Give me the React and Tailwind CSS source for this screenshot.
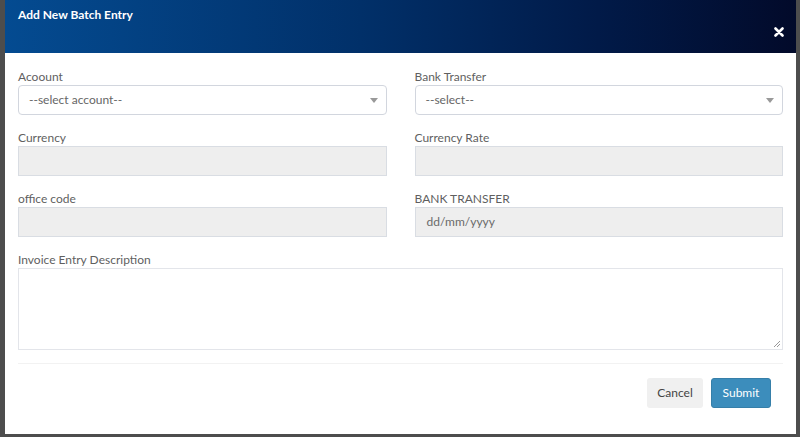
import React from "react";

function Label({ children }) {
  return (
    <div className="h-[17px] text-[12px] leading-[17px] text-[#5f5f5f]">{children}</div>
  );
}

function SelectBox({ text }) {
  return (
    <div className="flex h-[30px] items-center justify-between rounded-[4px] border border-[#d2d6de] bg-white pl-[10px] pr-[8px]">
      <span className="text-[12px] text-[#666666]">{text}</span>
      <svg width="8" height="5" viewBox="0 0 8 5" className="mt-[1px]">
        <path d="M0 0 L8 0 L4 5 Z" fill="#999999" />
      </svg>
    </div>
  );
}

function GrayInput({ text }) {
  return (
    <div className="flex h-[30px] items-center border border-[#d9dde3] bg-[#eeeeee] pl-[11px]">
      {text ? <span className="text-[12px] text-[#6a6a6a]">{text}</span> : null}
    </div>
  );
}

export default function App() {
  return (
    <div
      className="relative h-[437px] w-[800px] overflow-hidden bg-[#4d4d4d]"
      style={{ fontFamily: "Lato, 'Open Sans', sans-serif" }}
    >
      <div className="absolute left-[5px] top-0 flex h-[434px] w-[791px] flex-col bg-white">
        <div className="relative h-[53px] bg-[linear-gradient(90deg,#044b91_0%,#013069_45%,#011a48_75%,#020a2a_100%)]">
          <div className="pl-[13px] pt-[6px] text-[12px] font-bold leading-[18px] text-white">
            Add New Batch Entry
          </div>
          <svg
            className="absolute right-[12px] top-[27px]"
            width="10"
            height="10"
            viewBox="0 0 10 10"
          >
            <path d="M1.5 1.5 L8.5 8.5 M8.5 1.5 L1.5 8.5" stroke="white" strokeWidth="2.6" strokeLinecap="round" />
          </svg>
        </div>
        <div className="px-[13px] pt-[15px]">
          <div className="grid grid-cols-2 gap-x-[28px] gap-y-[14px]">
            <div>
              <Label>Acoount</Label>
              <SelectBox text="--select account--" />
            </div>
            <div>
              <Label>Bank Transfer</Label>
              <SelectBox text="--select--" />
            </div>
            <div>
              <Label>Currency</Label>
              <GrayInput />
            </div>
            <div>
              <Label>Currency Rate</Label>
              <GrayInput />
            </div>
            <div>
              <Label>office code</Label>
              <GrayInput />
            </div>
            <div>
              <Label>BANK TRANSFER</Label>
              <GrayInput text="dd/mm/yyyy" />
            </div>
          </div>
          <div className="mt-[14px]">
            <Label>Invoice Entry Description</Label>
            <div className="relative h-[82px] border border-[#e3e5ea] bg-white">
              <svg className="absolute bottom-[1px] right-[1px]" width="8" height="8" viewBox="0 0 8 8">
                <path d="M7 1 L1 7 M7 4 L4 7" stroke="#999999" strokeWidth="1" />
              </svg>
            </div>
          </div>
          <div className="mt-[13px] h-px bg-[#f2f2f2]" />
          <div className="flex justify-end gap-[8px] pr-[12px] pt-[14px]">
            <div className="flex h-[30px] w-[56px] items-center justify-center rounded-[3px] bg-[#f0f0f0] text-[12px] text-[#444444]">
              Cancel
            </div>
            <div className="flex h-[30px] w-[60px] items-center justify-center rounded-[3px] border border-[#367fa9] bg-[#3c8dbc] text-[12px] text-white">
              Submit
            </div>
          </div>
        </div>
      </div>
    </div>
  );
}
